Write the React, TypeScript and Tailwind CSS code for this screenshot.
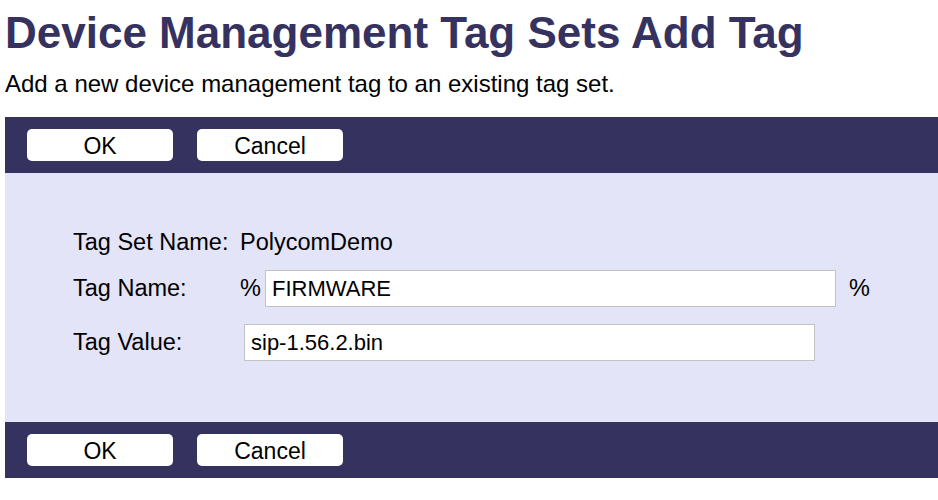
const font = { fontFamily: '"Liberation Sans", Arial, sans-serif' };

const ButtonBar = () => (
  <div className="flex h-[56px] items-center gap-[24px] bg-[#36325f] pl-[22px]">
    <button className="h-[32px] w-[146px] rounded-[5px] bg-white text-[23px] text-black">OK</button>
    <button className="h-[32px] w-[146px] rounded-[5px] bg-white text-[23px] text-black">Cancel</button>
  </div>
);

export default function App() {
  return (
    <div className="min-h-[500px] bg-white text-black" style={font}>
      <h1 className="pl-[5px] pt-[8px] text-[44px] font-bold leading-[50px] text-[#36325f]">
        Device Management Tag Sets Add Tag
      </h1>
      <p className="pl-[5px] pt-[12px] text-[24px] leading-[28px]">
        Add a new device management tag to an existing tag set.
      </p>
      <div className="ml-[5px] mt-[19px]">
        <ButtonBar />
        <div className="flex h-[249px] flex-col bg-[#e4e4f8] pl-[68px] pt-[56px] text-[23.5px]">
          <div className="flex h-[28px] items-center">
            <span className="w-[167px]">Tag Set Name:</span>
            <span>PolycomDemo</span>
          </div>
          <div className="mt-[13px] flex h-[37px] items-center">
            <span className="w-[167px]">Tag Name:</span>
            <span className="w-[25px]">%</span>
            <input
              className="h-[37px] w-[571px] border border-[#c2c2c2] bg-white px-[6px] text-[22px] outline-none"
              defaultValue="FIRMWARE"
            />
            <span className="ml-[13px]">%</span>
          </div>
          <div className="mt-[17px] flex h-[37px] items-center">
            <span className="w-[171px]">Tag Value:</span>
            <input
              className="h-[37px] w-[571px] border border-[#c2c2c2] bg-white px-[6px] text-[22px] outline-none"
              defaultValue="sip-1.56.2.bin"
            />
          </div>
        </div>
        <ButtonBar />
      </div>
    </div>
  );
}
